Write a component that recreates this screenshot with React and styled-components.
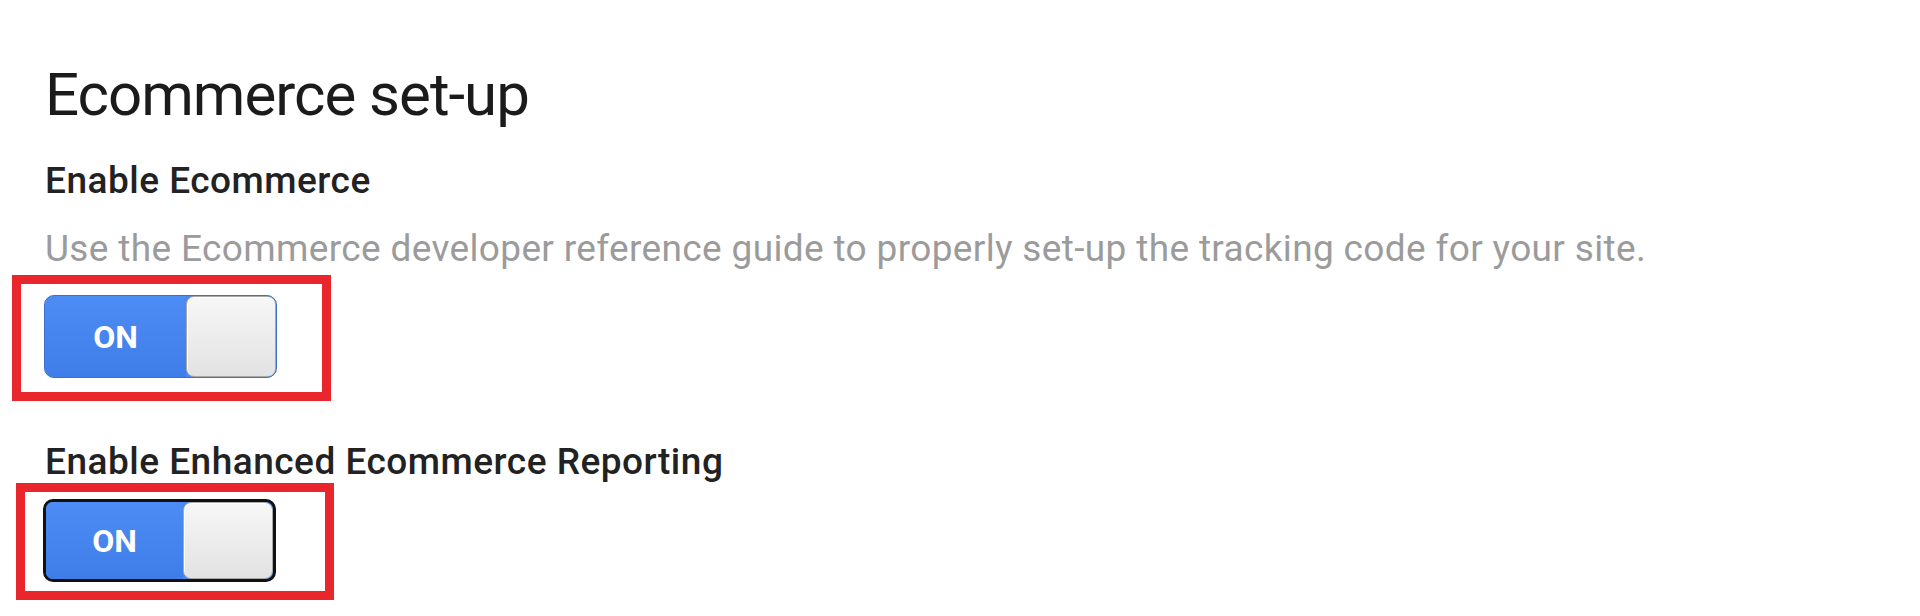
import React from "react";
import styled, { createGlobalStyle } from "styled-components";

const GlobalStyle = createGlobalStyle`
  html, body {
    margin: 0;
    padding: 0;
    background: #ffffff;
  }
  body {
    font-family: Roboto, "Liberation Sans", sans-serif;
  }
`;

const Page = styled.div`
  width: 1920px;
  height: 616px;
  overflow: hidden;
  padding: 60px 0 0 45px;
  box-sizing: border-box;
  display: flex;
  flex-direction: column;
  align-items: flex-start;
`;

const Title = styled.h1`
  margin: 0;
  font-size: 60px;
  line-height: 70px;
  font-weight: 400;
  color: #1b1b1b;
  letter-spacing: -1px;
`;

const Label = styled.h3`
  margin: ${(p) => p.$top}px 0 0 0;
  font-size: 37px;
  line-height: 42px;
  font-weight: 500;
  color: #222222;
  letter-spacing: 0.5px;
`;

const Help = styled.p`
  margin: 26px 0 0 0;
  font-size: 37px;
  line-height: 42px;
  font-weight: 400;
  color: #9b9b9b;
  letter-spacing: 0.35px;
`;

const Highlight = styled.div`
  margin: ${(p) => p.$top}px 0 0 ${(p) => p.$left}px;
  border: 9px solid #e8262b;
  padding: ${(p) => p.$pad};
  display: flex;
`;

const Switch = styled.div`
  width: 233px;
  height: 83px;
  box-sizing: border-box;
  border-radius: 10px;
  display: flex;
  overflow: hidden;
  border: ${(p) => (p.$focused ? "3px solid #111111" : "1px solid #3b6fc9")};
  background: #4a87ef;
`;

const OnPart = styled.div`
  flex: 1;
  display: flex;
  align-items: center;
  justify-content: center;
  color: #ffffff;
  font-size: 32px;
  font-weight: 700;
  background: linear-gradient(#4d8cf5, #3f7ee8);
`;

const Knob = styled.div`
  width: 90px;
  box-sizing: border-box;
  border: 1px solid #a8a8a8;
  border-radius: 8px;
  background: linear-gradient(#f7f7f7, #e2e2e2);
  box-shadow: inset 1px 1px 0 #ffffff;
`;

function Toggle({ focused }) {
  return (
    <Switch $focused={focused}>
      <OnPart>ON</OnPart>
      <Knob />
    </Switch>
  );
}

export default function App() {
  return (
    <>
      <GlobalStyle />
      <Page>
        <Title>Ecommerce set-up</Title>
        <Label $top={30}>Enable Ecommerce</Label>
        <Help>
          Use the Ecommerce developer reference guide to properly set-up the
          tracking code for your site.
        </Help>
        <Highlight $top={5} $left={-33} $pad="11px 45px 14px 23px">
          <Toggle />
        </Highlight>
        <Label $top={40}>Enable Enhanced Ecommerce Reporting</Label>
        <Highlight $top={0} $left={-29} $pad="7px 49px 9px 18px">
          <Toggle focused />
        </Highlight>
      </Page>
    </>
  );
}
